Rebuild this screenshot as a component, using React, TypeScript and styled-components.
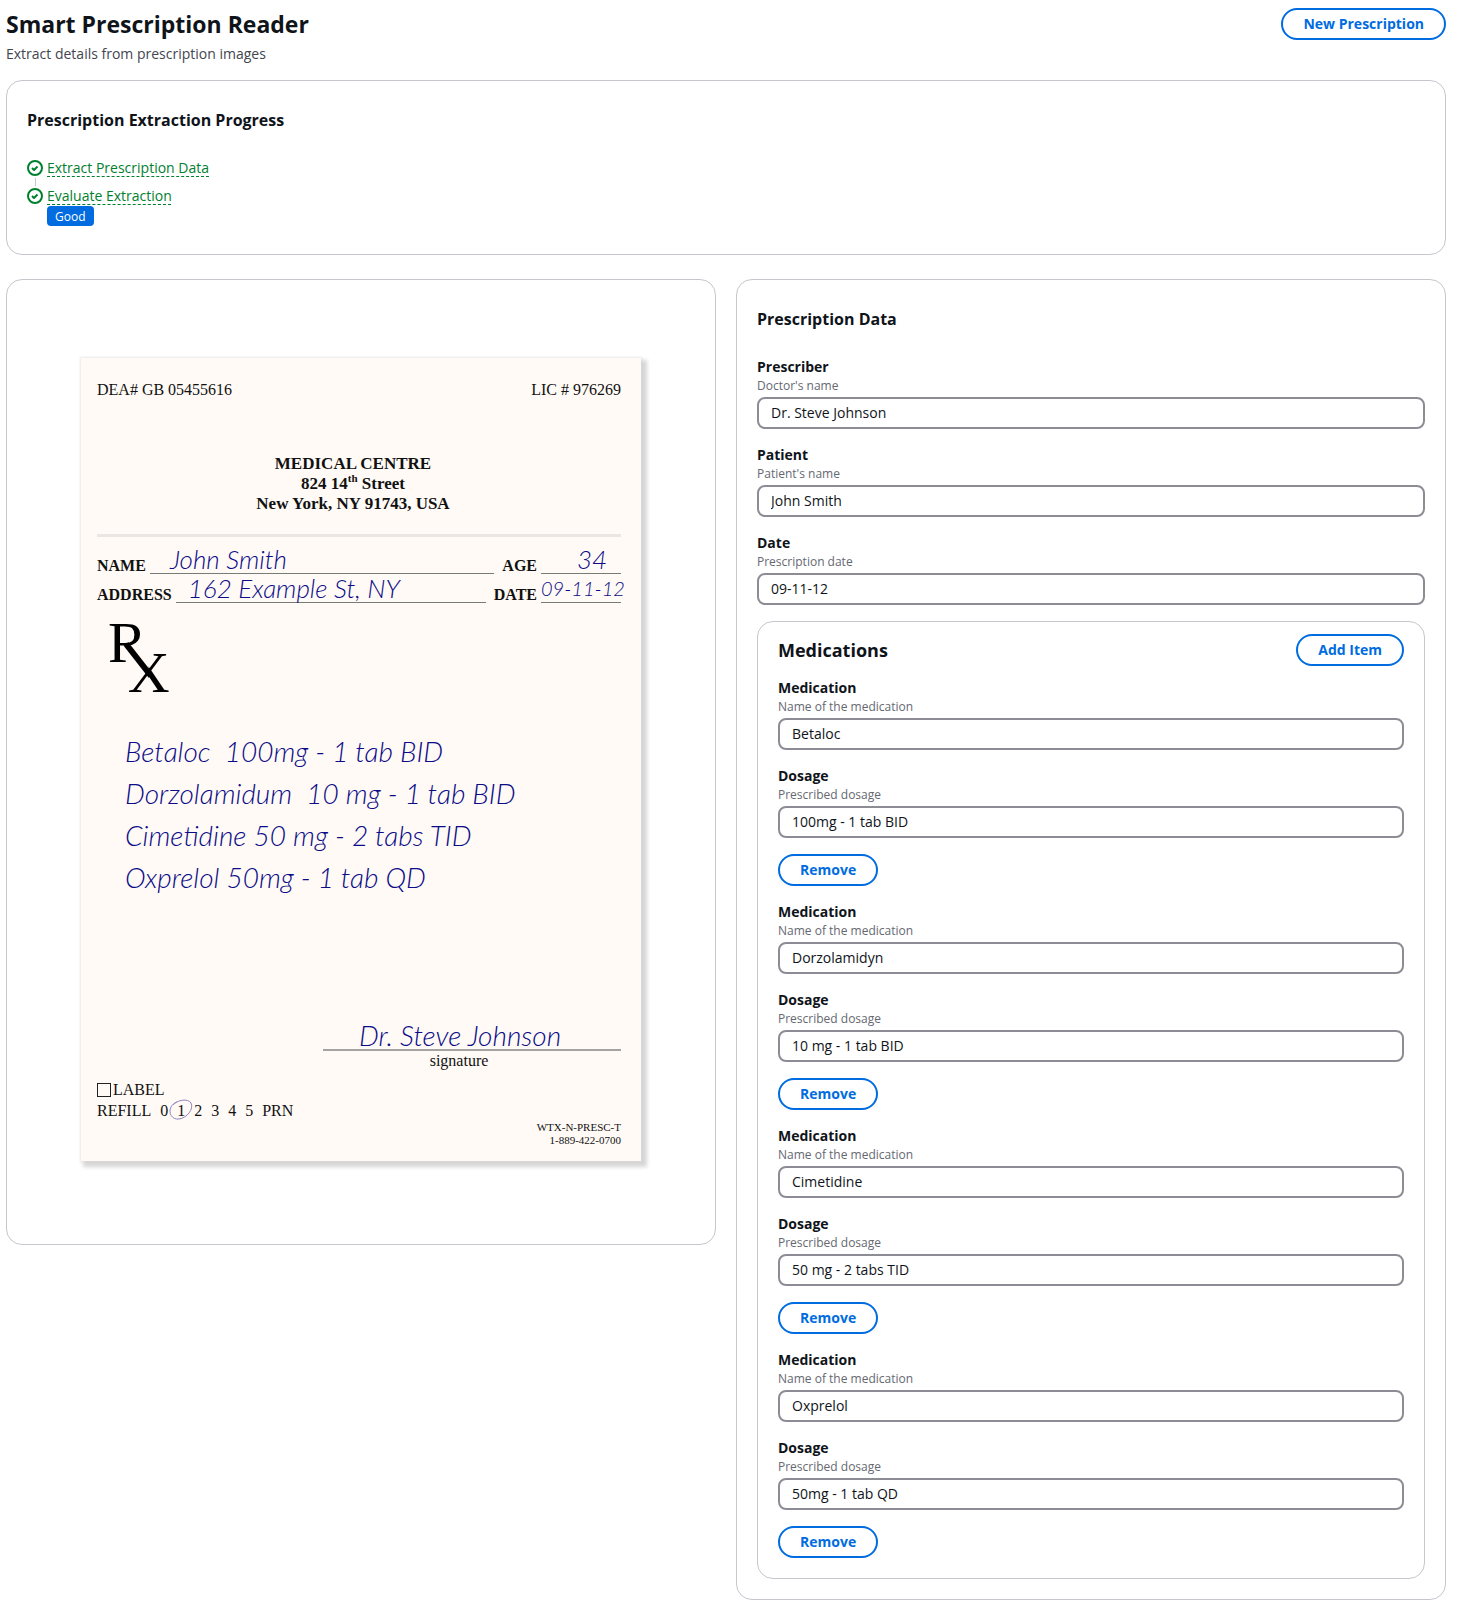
import React, { useId, useState } from "react";
import styled, { createGlobalStyle } from "styled-components";

const color = {
  text: "#0f141a",
  secondary: "#424650",
  hint: "#656871",
  accent: "#006ce0",
  success: "#00802f",
  divider: "#c6c6cd",
  inputBorder: "#8c8c94",
  paper: "#fffaf6",
  ink: "#0c0c88",
};

const GlobalStyle = createGlobalStyle`
  *, *::before, *::after { box-sizing: border-box; }
  body {
    margin: 0;
    background: #fff;
    color: ${color.text};
    font-family: "Open Sans", "Noto Sans", Helvetica, Arial, sans-serif;
    font-size: 14px;
    line-height: 20px;
  }
  h1, h2, h3, p, ul, ol { margin: 0; padding: 0; }
  button, input { font: inherit; }
`;

const Page = styled.main`
  padding: 8px 13px 5px 6px;
`;

const PageHeader = styled.header`
  display: flex;
  flex-direction: column;
  gap: 4px;
  margin-bottom: 16px;
`;

const HeaderRow = styled.div`
  display: flex;
  align-items: center;
  justify-content: space-between;
`;

const PageTitle = styled.h1`
  font-size: 23px;
  line-height: 30px;
  font-weight: 700;
`;

const PageDescription = styled.p`
  color: ${color.secondary};
`;

const OutlineButton = styled.button`
  height: 32px;
  padding: 0 20px;
  border: 2px solid ${color.accent};
  border-radius: 20px;
  background: #fff;
  color: ${color.accent};
  font-weight: 700;
  white-space: nowrap;
  cursor: pointer;
`;

const Card = styled.section`
  border: 1px solid ${color.divider};
  border-radius: 16px;
  background: #fff;
`;

const PaddedCard = styled(Card)`
  padding: 20px;
`;

const CardTitle = styled.h3`
  padding: 8px 0 27px;
  font-size: 16px;
  line-height: 22px;
  font-weight: 700;
`;

const Steps = styled.ol`
  list-style: none;
  padding-bottom: 8px;
`;

const Step = styled.li`
  display: grid;
  grid-template-columns: 16px 1fr;
  column-gap: 4px;
  justify-items: start;
`;

const StepMarker = styled.span`
  display: flex;
  flex-direction: column;
  align-items: center;
  padding-top: 2px;
`;

const StepConnector = styled.span`
  width: 1px;
  height: 8px;
  margin-top: 2px;
  background: ${color.divider};
`;

const StepLink = styled.button`
  height: 20px;
  padding: 0;
  border: 0;
  background: none;
  color: ${color.success};
  text-decoration: underline dashed 1px;
  text-underline-offset: 3px;
  text-decoration-skip-ink: none;
  cursor: pointer;
`;

const Badge = styled.span`
  grid-column: 2;
  padding: 3px 8px 1px;
  border-radius: 4px;
  background: ${color.accent};
  color: #fff;
  font-size: 12px;
  line-height: 16px;
`;

const Columns = styled.div`
  display: grid;
  grid-template-columns: 1fr 1fr;
  gap: 20px;
  align-items: start;
  margin-top: 24px;
`;

const PreviewCard = styled(Card)`
  padding: 78px 74px 83px;
`;

const Paper = styled.article`
  display: flex;
  flex-direction: column;
  padding: 22px 20px 14px 16px;
  background: ${color.paper};
  box-shadow: 4px 4px 4px 2px #d6d6d6, 0 0 2px 1px #ececec;
  color: #111;
  font-family: "Liberation Serif", "Times New Roman", serif;
  font-size: 16px;
`;

const PaperTop = styled.div`
  display: flex;
  justify-content: space-between;
  margin-bottom: 54px;
`;

const Clinic = styled.address`
  padding: 0 12px 20px 0;
  border-bottom: 3px solid #e9e6e3;
  font-size: 17px;
  font-style: normal;
  font-weight: 700;
  text-align: center;

  sup {
    font-size: 11px;
    line-height: 0;
  }
`;

const PatientLines = styled.div`
  margin-top: 8px;
`;

const PaperRow = styled.div`
  display: flex;
  align-items: flex-end;
  gap: 4px;
  height: 29px;
`;

const PaperLabel = styled.b`
  line-height: 16px;
`;

const penSizes = { small: 20, medium: 26, large: 28 };

const Pen = styled.span<{ $size?: keyof typeof penSizes }>`
  color: ${color.ink};
  font-family: Lato, "Open Sans", sans-serif;
  font-size: ${(p) => penSizes[p.$size ?? "large"]}px;
  font-style: italic;
  font-weight: 300;
  line-height: 28px;
  white-space: pre;
`;

const Blank = styled.span<{ $inset?: number; $fixed?: boolean }>`
  display: flex;
  flex: ${(p) => (p.$fixed ? "0 0 80px" : "1")};
  min-width: 0;
  height: 29px;
  margin-right: ${(p) => (p.$fixed ? 0 : 4)}px;
  padding-left: ${(p) => p.$inset ?? 0}px;
  border-bottom: 1px solid #777c77;
`;

const RxMark = styled.div`
  position: relative;
  display: flex;
  align-items: flex-start;
  margin: 11px 0 29px 11px;
  color: #000;
  font-size: 58px;
  line-height: 58px;

  svg {
    position: absolute;
    left: 0;
    top: 0;
  }
`;

const RxUpper = styled.span`
  clip-path: polygon(0 0, 100% 0, 100% 31px, 19px 31px, 19px 100%, 0 100%);
`;

const RxLower = styled.span`
  margin: 30px 0 0 -19px;
  clip-path: polygon(21px 0, 100% 0, 100% 100%, 0 100%, 0 29px, 21px 29px);
`;

const Orders = styled.ul`
  display: flex;
  flex-direction: column;
  list-style: none;
  padding-left: 28px;

  li { height: 42px; padding-top: 6px; }
`;

const Signature = styled.div`
  align-self: flex-end;
  display: flex;
  flex-direction: column;
  width: 298px;
  margin-top: 122px;
`;

const SignatureLine = styled.span`
  display: flex;
  padding-left: 36px;
  border-bottom: 2px solid #a3a3a3;
`;

const SignatureCaption = styled.span`
  padding-right: 26px;
  text-align: center;
`;

const LabelOption = styled.label`
  display: flex;
  align-items: center;
  gap: 2px;
  margin-top: 8px;
  line-height: 21px;
`;

const PaperCheckbox = styled.input`
  appearance: none;
  width: 14px;
  height: 14px;
  margin: 0;
  border: 1px solid #222;
`;

const Refills = styled.div`
  display: flex;
  gap: 9px;
  line-height: 21px;
`;

const RefillChosen = styled.span`
  position: relative;

  svg {
    position: absolute;
    left: -8px;
    top: -1px;
  }
`;

const FormCode = styled.div`
  font-size: 11px;
  line-height: 13px;
  text-align: right;
`;

const Form = styled.form`
  display: flex;
  flex-direction: column;
  gap: 16px;
`;

const FieldBox = styled.div`
  display: flex;
  flex-direction: column;
`;

const FieldLabel = styled.label`
  font-weight: 700;
`;

const FieldHint = styled.span`
  margin-bottom: 2px;
  color: ${color.hint};
  font-size: 12px;
  line-height: 18px;
`;

const TextInput = styled.input`
  width: 100%;
  height: 32px;
  padding: 0 12px 2px;
  border: 2px solid ${color.inputBorder};
  border-radius: 8px;
  background: #fff;
  color: ${color.text};
`;

const MedicationsCard = styled(Card)`
  display: flex;
  flex-direction: column;
  gap: 16px;
  padding: 12px 20px 20px;
`;

const MedicationsHeader = styled(HeaderRow)`
  margin-bottom: -4px;
`;

const MedicationsTitle = styled.h2`
  font-size: 18px;
  line-height: 24px;
  font-weight: 700;
`;

const MedicationItem = styled.div`
  display: flex;
  flex-direction: column;
  gap: 16px;

  > button { align-self: flex-start; }
`;

function SuccessIcon() {
  return (
    <svg width="16" height="16" viewBox="0 0 16 16" fill="none" stroke={color.success} strokeWidth="2" aria-hidden="true">
      <circle cx="8" cy="8" r="7" />
      <path d="m5 8 2 2 3.5-3.5" strokeLinejoin="round" />
    </svg>
  );
}

type FieldProps = { label: string; hint: string; value: string; onChange: (value: string) => void };

function Field({ label, hint, value, onChange }: FieldProps) {
  const id = useId();
  return (
    <FieldBox>
      <FieldLabel htmlFor={id}>{label}</FieldLabel>
      <FieldHint id={`${id}-hint`}>{hint}</FieldHint>
      <TextInput
        id={id}
        type="text"
        aria-describedby={`${id}-hint`}
        value={value}
        onChange={(e) => onChange(e.target.value)}
      />
    </FieldBox>
  );
}

const orders = [
  "Betaloc  100mg - 1 tab BID",
  "Dorzolamidum  10 mg - 1 tab BID",
  "Cimetidine 50 mg - 2 tabs TID",
  "Oxprelol 50mg - 1 tab QD",
];

function PrescriptionPaper() {
  return (
    <Paper>
      <PaperTop>
        <span>DEA# GB 05455616</span>
        <span>LIC # 976269</span>
      </PaperTop>
      <Clinic>
        MEDICAL CENTRE
        <br />
        824 14<sup>th</sup> Street
        <br />
        New York, NY 91743, USA
      </Clinic>
      <PatientLines>
        <PaperRow>
          <PaperLabel>NAME</PaperLabel>
          <Blank $inset={20}><Pen $size="medium">John Smith</Pen></Blank>
          <PaperLabel>AGE</PaperLabel>
          <Blank $fixed $inset={36}><Pen $size="medium">34</Pen></Blank>
        </PaperRow>
        <PaperRow>
          <PaperLabel>ADDRESS</PaperLabel>
          <Blank $inset={12}><Pen $size="medium">162 Example St, NY</Pen></Blank>
          <PaperLabel>DATE</PaperLabel>
          <Blank $fixed><Pen $size="small">09-11-12</Pen></Blank>
        </PaperRow>
      </PatientLines>
      <RxMark>
        <RxUpper>R</RxUpper>
        <RxLower>X</RxLower>
        {/* the leg that the two letters share */}
        <svg width="64" height="88" viewBox="0 0 64 88" stroke="#000" strokeWidth="6" aria-hidden="true">
          <path d="M18 30 43 62" />
        </svg>
      </RxMark>
      <Orders>
        {orders.map((order) => (
          <li key={order}><Pen>{order}</Pen></li>
        ))}
      </Orders>
      <Signature>
        <SignatureLine><Pen>Dr. Steve Johnson</Pen></SignatureLine>
        <SignatureCaption>signature</SignatureCaption>
      </Signature>
      <LabelOption>
        <PaperCheckbox type="checkbox" />
        LABEL
      </LabelOption>
      <Refills>
        <span>REFILL</span>
        <span>0</span>
        <RefillChosen>
          1
          <svg width="24" height="22" viewBox="0 0 24 22" fill="none" stroke="#8f86bd" aria-hidden="true">
            <path d="M4 6C8 1 19-1 22 4c3 6-4 15-12 16C3 21-1 14 2 8c1-2 3-4 6-5" />
          </svg>
        </RefillChosen>
        <span>2</span>
        <span>3</span>
        <span>4</span>
        <span>5</span>
        <span>PRN</span>
      </Refills>
      <FormCode>
        WTX-N-PRESC-T
        <br />
        1-889-422-0700
      </FormCode>
    </Paper>
  );
}

type Medication = { id: number; name: string; dosage: string };

const initialMedications: Medication[] = [
  { id: 1, name: "Betaloc", dosage: "100mg - 1 tab BID" },
  { id: 2, name: "Dorzolamidyn", dosage: "10 mg - 1 tab BID" },
  { id: 3, name: "Cimetidine", dosage: "50 mg - 2 tabs TID" },
  { id: 4, name: "Oxprelol", dosage: "50mg - 1 tab QD" },
];

export default function App() {
  const [prescriber, setPrescriber] = useState("Dr. Steve Johnson");
  const [patient, setPatient] = useState("John Smith");
  const [date, setDate] = useState("09-11-12");
  const [medications, setMedications] = useState(initialMedications);

  const update = (id: number, change: Partial<Medication>) =>
    setMedications((items) => items.map((m) => (m.id === id ? { ...m, ...change } : m)));
  const remove = (id: number) => setMedications((items) => items.filter((m) => m.id !== id));
  const add = () => setMedications((items) => [...items, { id: Date.now(), name: "", dosage: "" }]);

  return (
    <>
      <GlobalStyle />
      <Page>
        <PageHeader>
          <HeaderRow>
            <PageTitle>Smart Prescription Reader</PageTitle>
            <OutlineButton type="button">New Prescription</OutlineButton>
          </HeaderRow>
          <PageDescription>Extract details from prescription images</PageDescription>
        </PageHeader>

        <PaddedCard>
          <CardTitle>Prescription Extraction Progress</CardTitle>
          <Steps>
            <Step>
              <StepMarker>
                <SuccessIcon />
                <StepConnector />
              </StepMarker>
              <StepLink type="button">Extract Prescription Data</StepLink>
            </Step>
            <Step>
              <StepMarker>
                <SuccessIcon />
              </StepMarker>
              <StepLink type="button">Evaluate Extraction</StepLink>
              <Badge>Good</Badge>
            </Step>
          </Steps>
        </PaddedCard>

        <Columns>
          <PreviewCard>
            <PrescriptionPaper />
          </PreviewCard>

          <PaddedCard>
            <CardTitle>Prescription Data</CardTitle>
            <Form onSubmit={(e) => e.preventDefault()}>
              <Field label="Prescriber" hint="Doctor's name" value={prescriber} onChange={setPrescriber} />
              <Field label="Patient" hint="Patient's name" value={patient} onChange={setPatient} />
              <Field label="Date" hint="Prescription date" value={date} onChange={setDate} />
              <MedicationsCard>
                <MedicationsHeader>
                  <MedicationsTitle>Medications</MedicationsTitle>
                  <OutlineButton type="button" onClick={add}>Add Item</OutlineButton>
                </MedicationsHeader>
                {medications.map((m) => (
                  <MedicationItem key={m.id}>
                    <Field
                      label="Medication"
                      hint="Name of the medication"
                      value={m.name}
                      onChange={(name) => update(m.id, { name })}
                    />
                    <Field
                      label="Dosage"
                      hint="Prescribed dosage"
                      value={m.dosage}
                      onChange={(dosage) => update(m.id, { dosage })}
                    />
                    <OutlineButton type="button" onClick={() => remove(m.id)}>Remove</OutlineButton>
                  </MedicationItem>
                ))}
              </MedicationsCard>
            </Form>
          </PaddedCard>
        </Columns>
      </Page>
    </>
  );
}
